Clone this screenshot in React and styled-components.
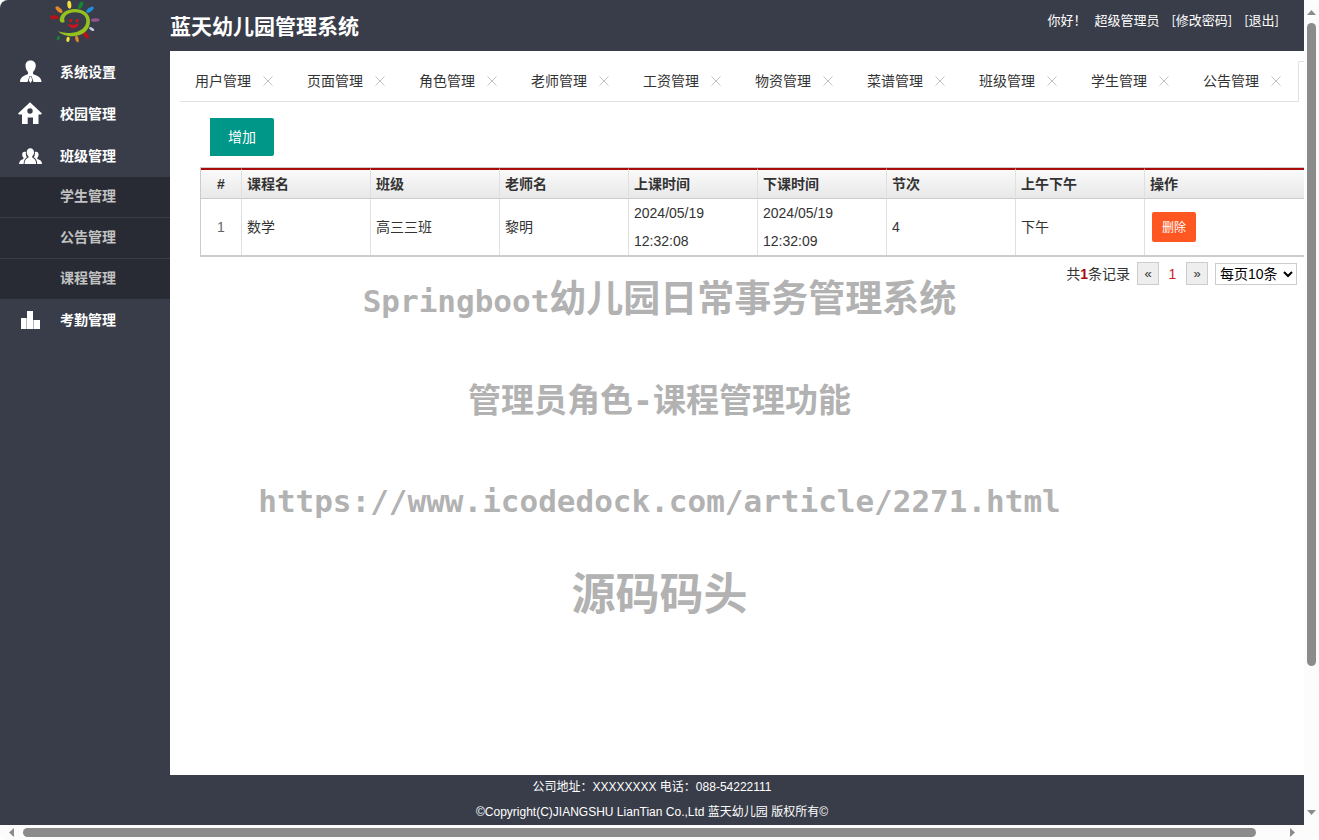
import React from 'react';
import styled, { createGlobalStyle } from 'styled-components';

const GlobalStyle = createGlobalStyle`
  * {
    box-sizing: border-box;
  }

  body {
    margin: 0;
    background: #fff;
    color: #333;
    font-family: 'Liberation Sans', 'Noto Sans CJK SC', sans-serif;
    font-size: 14px;
  }

  button,
  select {
    font-family: inherit;
  }

  a {
    color: inherit;
    text-decoration: none;
  }
`;

const Window = styled.div`
  position: relative;
  display: grid;
  grid-template-columns: minmax(0, 1fr) 15px;
  grid-template-rows: minmax(0, 1fr) 15px;
  height: 100vh;
  border-radius: 8px;
  background: #fcfcfc;
  overflow: hidden;
`;

const Page = styled.div`
  display: flex;
  flex-direction: column;
  min-width: 0;
  background: #393d49;
  overflow: hidden;
`;

const Header = styled.header`
  display: flex;
  align-items: center;
  height: 51px;
  color: #fff;
`;

const Brand = styled.div`
  display: flex;
  width: 170px;
  height: 51px;
  padding-left: 40px;
`;

const SiteTitle = styled.h1`
  margin: 0;
  padding-top: 2px;
  font-size: 21px;
  line-height: 50px;
`;

const UserBar = styled.div`
  display: flex;
  gap: 12px;
  margin-left: auto;
  padding: 0 25px 12px 0;
  font-family: 'Noto Sans CJK SC', sans-serif;
  font-size: 13px;
  line-height: 20px;
`;

const Greeting = styled.div`
  display: flex;
  gap: 8px;
`;

const Body = styled.div`
  display: flex;
  flex: 1;
  min-height: 0;
`;

const Sidebar = styled.nav`
  flex: none;
  width: 170px;
`;

const MenuItem = styled.a`
  display: flex;
  align-items: center;
  gap: 18px;
  height: 42px;
  padding-left: 18px;
  color: #fff;
  font-weight: bold;

  span {
    padding-bottom: 2px;
  }
`;

const SubMenu = styled.div`
  background: #282b33;
`;

const SubItem = styled.a`
  display: block;
  padding: 0 0 2px 60px;
  color: #c2c2c2;
  font-weight: bold;
  line-height: 38px;

  & + & {
    border-top: 1px solid #393d49;
  }
`;

const Main = styled.main`
  flex: 1;
  min-width: 0;
  padding: 10px 0 0 10px;
  background: #fff;
`;

const Tabs = styled.div`
  display: flex;
  height: 41px;
  border-bottom: 1px solid #e2e2e2;
`;

const Tab = styled.div`
  display: flex;
  flex: none;
  align-items: center;
  gap: 8px;
  padding: 0 15px;

  span {
    padding-bottom: 2px;
  }
`;

const TabClose = styled.button`
  display: flex;
  align-items: center;
  justify-content: center;
  width: 18px;
  height: 18px;
  padding: 0;
  border: 0;
  background: none;
`;

const ActiveTab = styled.div`
  flex: 1;
  height: 41px;
  margin-left: -2px;
  border: 1px solid #e2e2e2;
  border-width: 1px 0 0 1px;
  border-radius: 2px 0 0 0;
  background: #fff;
`;

const Content = styled.div`
  padding: 16px 0 0 20px;
`;

const AddButton = styled.button`
  display: block;
  height: 38px;
  margin: 0 0 11px 10px;
  padding: 0 18px 2px;
  border: 0;
  border-radius: 0 2px 2px 0;
  background: #009688;
  color: #fff;
  font-size: 14px;
`;

const Table = styled.table`
  width: 100%;
  table-layout: fixed;
  border-collapse: separate;
  border-spacing: 0;
  border: 1px solid #ccc;
  border-width: 1px 0 2px 1px;

  th,
  td {
    padding: 0 5px;
    border-right: 1px solid #e0e0e0;
    text-align: left;
    line-height: 28px;
  }

  th {
    border-top: 2px solid #a90a0a;
    border-bottom: 1px solid #ccc;
    background: linear-gradient(#fafafa, #e8e8e8);
  }

  th:first-child,
  td:first-child {
    width: 41px;
    text-align: center;
  }

  td:first-child {
    color: #666;
  }

  th:last-child,
  td:last-child {
    width: auto;
    border-right: 0;
  }
`;

const Th = styled.th`
  width: 129px;
`;

const DeleteButton = styled.button`
  display: block;
  height: 30px;
  margin-left: 2px;
  padding: 0 10px 2px;
  border: 0;
  border-radius: 2px;
  background: #ff5722;
  color: #fff;
  font-size: 12px;
`;

const Pager = styled.div`
  display: flex;
  align-items: center;
  justify-content: flex-end;
  gap: 7px;
  padding: 5px 7px 0 0;

  b {
    color: #a90a0a;
  }
`;

const Total = styled.span`
  padding-bottom: 2px;
`;

const PageStep = styled.button`
  width: 22px;
  height: 23px;
  padding: 0;
  border: 1px solid #ccc;
  background: #eee;
  color: #333;
  font-size: 13px;
`;

const CurrentPage = styled.span`
  width: 13px;
  color: #c22;
  text-align: center;
`;

const PageSize = styled.select`
  width: 82px;
  height: 22px;
  padding: 0;
  border: 1px solid #ccc;
  background: #fff;
  color: #000;
  font-size: 14px;
`;

const Footer = styled.footer`
  color: #fff;
  font-size: 12px;
  line-height: 25px;
  text-align: center;

  p {
    margin: 0;
  }
`;

const Watermark = styled.div`
  position: absolute;
  top: 250px;
  left: 0;
  right: 0;
  color: #b2b2b2;
  font-family: 'DejaVu Sans Mono', 'Noto Sans CJK SC', monospace;
  font-weight: bold;
  text-align: center;
  pointer-events: none;
`;

const WatermarkLine = styled.div`
  font-size: ${({ $size }) => $size}px;
  line-height: ${({ $line }) => $line}px;
`;

const Latin = styled.span`
  font-size: 31px;
`;

const ScrollBar = styled.div`
  display: flex;
  flex-direction: ${({ $vertical }) => ($vertical ? 'column' : 'row')};
  align-items: center;
  background: #fcfcfc;
`;

const ScrollArrow = styled.svg`
  flex: none;
  width: ${({ $vertical }) => ($vertical ? 15 : 23)}px;
  height: ${({ $vertical }) => ($vertical ? 23 : 15)}px;
  fill: #8b8b8b;
`;

const ScrollTrack = styled.div`
  flex: 1;
  width: ${({ $vertical }) => ($vertical ? '9px' : 'auto')};
  height: ${({ $vertical }) => ($vertical ? 'auto' : '9px')};
`;

const ScrollThumb = styled.div`
  width: ${({ $vertical }) => ($vertical ? '100%' : '98%')};
  height: ${({ $vertical }) => ($vertical ? '82.5%' : '100%')};
  border-radius: 5px;
  background: #8b8b8b;
`;

const rays = [
  { x: 88, y: 14, rx: 6, ry: 12, r: -5, c: '#f4e23c' },
  { x: 122, y: 16, rx: 6, ry: 12, r: 25, c: '#14862f' },
  { x: 150, y: 29, rx: 6, ry: 13, r: 52, c: '#1d8fdc' },
  { x: 166, y: 60, rx: 5, ry: 13, r: 88, c: '#93548a' },
  { x: 155, y: 87, rx: 4, ry: 9, r: -58, c: '#c9c6e4' },
  { x: 138, y: 106, rx: 6, ry: 12, r: -38, c: '#b5121b' },
  { x: 111, y: 117, rx: 5, ry: 10, r: -12, c: '#e08a2c' },
  { x: 84, y: 118, rx: 5, ry: 8, r: 12, c: '#f4e23c' },
  { x: 55, y: 114, rx: 4, ry: 7, r: 28, c: '#14862f' },
  { x: 43, y: 52, rx: 6, ry: 13, r: -86, c: '#b5121b' },
  { x: 57, y: 29, rx: 6, ry: 13, r: -48, c: '#e08a2c' },
];

const Logo = () => (
  <svg width="70" height="50" viewBox="0 0 210 150" aria-hidden="true">
    {rays.map((ray) => (
      <ellipse
        key={`${ray.x}-${ray.y}`}
        cx={ray.x}
        cy={ray.y}
        rx={ray.rx}
        ry={ray.ry}
        fill={ray.c}
        transform={`rotate(${ray.r} ${ray.x} ${ray.y})`}
      />
    ))}
    <path
      fill="#95c11f"
      d="M74 66C66 70 60 67 59 60C60 40 80 28 104 27C132 27 150 42 150 64C150 90 128 108 99 109C80 109 64 104 55 94C70 99 82 100 97 98C121 95 139 82 139 62C138 46 124 37 104 37C83 38 68 49 74 66Z"
    />
    <g fill="#c4161c">
      <circle cx="92" cy="62" r="5" />
      <circle cx="111" cy="62" r="5" />
      <path d="M83 72Q101 77 117 70Q112 85 101 85Q88 84 83 72Z" />
    </g>
  </svg>
);

const icons = {
  user: (
    <path d="M12.500 .5C9.500.5 7.500 2.500 7.500 5.500C7.500 8 8.500 10.500 10 12V14C8 15.500 2 16 2 22H9.500L11.500 16H13.500L15.500 22H23.500C23.500 16 17 15.500 15 14V12C16.500 10.500 17.800 8 17.800 5.500C17.800 2.500 15.500.5 12.500.5ZM11.800 16.500L10.800 20.500L12.500 23L14.200 20.500L13.200 16.500Z" fillRule="evenodd" />
  ),
  house: (
    <path d="M12 .3L0 11.500L1 12.500H4V22H9.700V15.500H15V22H20.500V12.500H23L24 11.500ZM12 6.300A2.700 2.700 0 1 1 12 11.700A2.700 2.700 0 1 1 12 6.300Z" fillRule="evenodd" />
  ),
  group: (
    <path d="M12.300 4.300C10 4.300 8.700 6 8.700 8.200C8.700 10 9.500 11.500 10.500 12.300V13.500C9 14.500 6.800 15 6.500 20H18.200C17.900 15 15.600 14.500 14.200 13.500V12.300C15.200 11.500 16 10 16 8.200C16 6 14.600 4.300 12.300 4.300ZM8 8C5.500 7 4.200 8.500 4.200 10.500C4.200 12 4.700 13 5.500 13.800V15C3 16 1.500 16.500 1 20H5.600C5.800 16.500 7 14.500 9 13.300C8 12 7.500 10 8 8ZM16.800 8C19.200 7 20.600 8.500 20.600 10.500C20.600 12 20 13 19.300 13.800V15C21.800 16 24 16.500 24 20H19.200C19 16.500 17.700 14.500 15.700 13.300C16.700 12 17.200 10 16.800 8Z" />
  ),
  bars: (
    <>
      <path fill="#b4b7bd" d="M8 10H9V21H8ZM15 12H16V21H15Z" />
      <path d="M3 10H8V21H3ZM9 3H15V21H9ZM16 12H22V21H16Z" />
    </>
  ),
};

const Icon = ({ name }) => (
  <svg width="24" height="24" viewBox="0 0 24 24" fill="#fff" aria-hidden="true">
    {icons[name]}
  </svg>
);

const tabs = [
  '用户管理',
  '页面管理',
  '角色管理',
  '老师管理',
  '工资管理',
  '物资管理',
  '菜谱管理',
  '班级管理',
  '学生管理',
  '公告管理',
];

const subItems = ['学生管理', '公告管理', '课程管理'];

const columns = ['课程名', '班级', '老师名', '上课时间', '下课时间', '节次', '上午下午', '操作'];

const courses = [
  {
    id: 1,
    name: '数学',
    className: '高三三班',
    teacher: '黎明',
    start: '2024/05/19 12:32:08',
    end: '2024/05/19 12:32:09',
    section: 4,
    period: '下午',
  },
];

const App = () => {
  return (
    <Window>
      <GlobalStyle />
      <Page>
        <Header>
          <Brand>
            <Logo />
          </Brand>
          <SiteTitle>蓝天幼儿园管理系统</SiteTitle>
          <UserBar>
            <Greeting>
              <span>你好！</span>
              <span>超级管理员</span>
            </Greeting>
            <a href="#password">[修改密码]</a>
            <a href="#logout">[退出]</a>
          </UserBar>
        </Header>
        <Body>
          <Sidebar>
            <MenuItem href="#system"><Icon name="user" /><span>系统设置</span></MenuItem>
            <MenuItem href="#school"><Icon name="house" /><span>校园管理</span></MenuItem>
            <MenuItem href="#class"><Icon name="group" /><span>班级管理</span></MenuItem>
            <SubMenu>
              {subItems.map((item) => (
                <SubItem key={item} href="#sub">{item}</SubItem>
              ))}
            </SubMenu>
            <MenuItem href="#attendance"><Icon name="bars" /><span>考勤管理</span></MenuItem>
          </Sidebar>
          <Main>
            <Tabs>
              {tabs.map((tab) => (
                <Tab key={tab}>
                  <span>{tab}</span>
                  <TabClose aria-label={`关闭${tab}`}>
                    <svg width="10" height="10" viewBox="0 0 10 10" stroke="#c2c2c2" aria-hidden="true">
                      <path d="M.5 .5L9.500 9.500M9.500 .5L.5 9.500" />
                    </svg>
                  </TabClose>
                </Tab>
              ))}
              <ActiveTab />
            </Tabs>
            <Content>
              <AddButton>增加</AddButton>
              <Table>
                <thead>
                  <tr>
                    <Th>#</Th>
                    {columns.map((column) => (
                      <Th key={column}>{column}</Th>
                    ))}
                  </tr>
                </thead>
                <tbody>
                  {courses.map((course) => (
                    <tr key={course.id}>
                      <td>{course.id}</td>
                      <td>{course.name}</td>
                      <td>{course.className}</td>
                      <td>{course.teacher}</td>
                      <td>{course.start}</td>
                      <td>{course.end}</td>
                      <td>{course.section}</td>
                      <td>{course.period}</td>
                      <td>
                        <DeleteButton>删除</DeleteButton>
                      </td>
                    </tr>
                  ))}
                </tbody>
              </Table>
              <Pager>
                <Total>共<b>1</b>条记录</Total>
                <PageStep aria-label="上一页">«</PageStep>
                <CurrentPage>1</CurrentPage>
                <PageStep aria-label="下一页">»</PageStep>
                <PageSize aria-label="每页条数" defaultValue="10">
                  <option value="10">每页10条</option>
                </PageSize>
              </Pager>
            </Content>
          </Main>
        </Body>
        <Footer>
          <p>公司地址：XXXXXXXX 电话：088-54222111</p>
          <p>©Copyright(C)JIANGSHU LianTian Co.,Ltd 蓝天幼儿园 版权所有©</p>
        </Footer>
      </Page>

      <ScrollBar $vertical>
        <ScrollArrow $vertical viewBox="0 0 15 23" aria-hidden="true">
          <path d="M3 15L7.500 10L12 15Z" />
        </ScrollArrow>
        <ScrollTrack $vertical>
          <ScrollThumb $vertical />
        </ScrollTrack>
        <ScrollArrow $vertical viewBox="0 0 15 23" aria-hidden="true">
          <path d="M3 8L7.500 13L12 8Z" />
        </ScrollArrow>
      </ScrollBar>
      <ScrollBar>
        <ScrollArrow viewBox="0 0 23 15" aria-hidden="true">
          <path d="M14 3L9 7.500L14 12Z" />
        </ScrollArrow>
        <ScrollTrack>
          <ScrollThumb />
        </ScrollTrack>
        <ScrollArrow viewBox="0 0 23 15" aria-hidden="true">
          <path d="M9 3L14 7.500L9 12Z" />
        </ScrollArrow>
      </ScrollBar>

      <Watermark>
        <WatermarkLine $size={37} $line={100}>
          <Latin>Springboot</Latin>幼儿园日常事务管理系统
        </WatermarkLine>
        <WatermarkLine $size={33} $line={100}>管理员角色-课程管理功能</WatermarkLine>
        <WatermarkLine $size={31} $line={100}>https://www.icodedock.com/article/2271.html</WatermarkLine>
        <WatermarkLine $size={44} $line={88}>源码码头</WatermarkLine>
      </Watermark>
    </Window>
  );
};

export default App;
